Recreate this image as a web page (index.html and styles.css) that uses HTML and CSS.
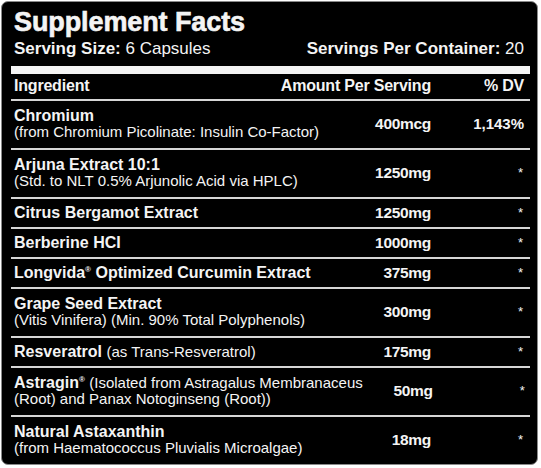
FILE: index.html
```html
<!DOCTYPE html>
<html lang="en">
<head>
  <meta charset="UTF-8">
  <title>Supplement Facts</title>
  <link rel="stylesheet" href="styles.css">
</head>
<body>
  <div class="label">
    <h1>Supplement Facts</h1>
    <div class="serving">
      <span><b>Serving Size:</b> 6 Capsules</span>
      <span><b>Servings Per Container:</b> 20</span>
    </div>
    <div class="bar"></div>

    <div class="head">
      <span class="head-name">Ingredient</span>
      <span class="head-amount">Amount Per Serving</span>
      <span class="head-dv">% DV</span>
    </div>

    <!-- ingredientes -->
    <div class="row">
      <div class="name"><b>Chromium</b><br><span class="sub">(from Chromium Picolinate: Insulin Co-Factor)</span></div>
      <div class="amount">400mcg</div>
      <div class="dv">1,143%</div>
    </div>
    <div class="row">
      <div class="name"><b>Arjuna Extract 10:1</b><br><span class="sub">(Std. to NLT 0.5% Arjunolic Acid via HPLC)</span></div>
      <div class="amount">1250mg</div>
      <div class="dv star">*</div>
    </div>
    <div class="row single">
      <div class="name"><b>Citrus Bergamot Extract</b></div>
      <div class="amount">1250mg</div>
      <div class="dv star">*</div>
    </div>
    <div class="row single">
      <div class="name"><b>Berberine HCI</b></div>
      <div class="amount">1000mg</div>
      <div class="dv star">*</div>
    </div>
    <div class="row single">
      <div class="name"><b>Longvida<sup>®</sup> Optimized Curcumin Extract</b></div>
      <div class="amount">375mg</div>
      <div class="dv star">*</div>
    </div>
    <div class="row">
      <div class="name"><b>Grape Seed Extract</b><br><span class="sub">(Vitis Vinifera) (Min. 90% Total Polyphenols)</span></div>
      <div class="amount">300mg</div>
      <div class="dv star">*</div>
    </div>
    <div class="row single">
      <div class="name"><b>Resveratrol</b> <span class="sub">(as Trans-Resveratrol)</span></div>
      <div class="amount">175mg</div>
      <div class="dv star">*</div>
    </div>
    <div class="row">
      <div class="name"><b>Astragin<sup>®</sup></b> <span class="sub">(Isolated from Astragalus Membranaceus<br>(Root) and Panax Notoginseng (Root))</span></div>
      <div class="amount">50mg</div>
      <div class="dv star">*</div>
    </div>
    <div class="row last">
      <div class="name"><b>Natural Astaxanthin</b><br><span class="sub">(from Haematococcus Pluvialis Microalgae)</span></div>
      <div class="amount">18mg</div>
      <div class="dv star">*</div>
    </div>
  </div>
</body>
</html>
```

FILE: styles.css
```css
body {
  margin: 0;
  background: #fff;
  font-family: 'Liberation Sans', Arial, sans-serif;
  color: #f4f4f4;
}

.label {
  width: 537px;
  height: 464px;
  margin: 1px 0 0 1px;
  padding: 6px 7px 0 9px;
  box-sizing: border-box;
  background: #000;
  border: 1px solid #8a8a8a;
  border-radius: 7px;
  overflow: hidden;
}

h1 {
  margin: 0;
  padding-left: 3px;
  font-size: 27px;
  line-height: 28px;
  letter-spacing: -0.1px;
  -webkit-text-stroke: 0.6px #f4f4f4;
}

.serving {
  display: flex;
  justify-content: space-between;
  margin-top: 3px;
  padding: 0 6px 0 3px;
  font-size: 17px;
  line-height: 20px;
}

.bar {
  height: 8px;
  margin-top: 7px;
  background: #f4f4f4;
}

.head {
  display: flex;
  padding: 3px 6px 5px 3px;
  font-size: 16px;
  line-height: 17px;
  font-weight: bold;
  letter-spacing: -0.2px;
}

.head-name {
  flex: 1;
}

.head-dv {
  width: 93px;
  text-align: right;
}

.row {
  display: grid;
  grid-template-columns: 1fr 70px 93px;
  align-items: center;
  padding: 7px 6px 8px 3px;
  border-top: 2px solid #d6d6d6;
  font-size: 16px;
  line-height: 16px;
}

.row.single {
  padding: 6px 6px 6px 3px;
}

.name {
  white-space: nowrap;
}

.sub {
  font-size: 15px;
  font-weight: normal;
}

sup {
  font-size: 8px;
  line-height: 0;
  vertical-align: 6px;
}

.amount {
  text-align: right;
  font-weight: bold;
  font-size: 15.5px;
  letter-spacing: -0.3px;
}

.dv {
  text-align: right;
  font-size: 15px;
  font-weight: bold;
}

.star {
  font-size: 13px;
  font-weight: normal;
  padding-right: 1px;
}
```
